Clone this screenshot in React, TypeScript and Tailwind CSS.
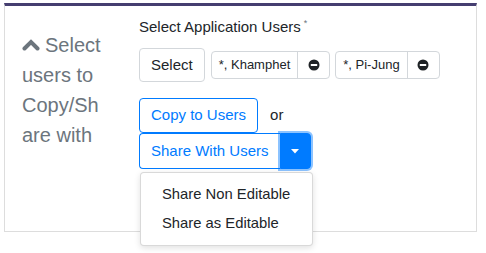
import React from "react";

function MinusCircle() {
  return (
    <svg width="12" height="12" viewBox="0 0 12 12">
      <circle cx="6" cy="6" r="5.5" fill="#1f2326" />
      <rect x="2.8" y="5" width="6.4" height="2" fill="#fff" />
    </svg>
  );
}

function Chip({ label }: { label: string }) {
  return (
    <div className="flex h-[28px] items-stretch rounded-[4px] border border-[#d3d7db] text-[13px] text-[#212529]">
      <div className="flex items-center px-[7px]">{label}</div>
      <div className="flex w-[32px] items-center justify-center border-l border-[#d3d7db]">
        <MinusCircle />
      </div>
    </div>
  );
}

export default function App() {
  return (
    <div
      className="min-h-[253px] bg-white pl-[4px] pt-[3px]"
      style={{ fontFamily: '"Liberation Sans", Arial, Helvetica, sans-serif' }}
    >
      <div className="flex h-[229px] w-[473px] border border-t-[3px] border-[#dddddd] border-t-[#453e70] bg-white">
        <div className="w-[134px] shrink-0 pl-[17px] pt-[24px]">
          <div className="w-[82px] break-all text-[20px] leading-[30px] text-[#6c757d]">
            <svg
              width="18"
              height="12"
              viewBox="0 0 18 12"
              className="mr-[5px] inline-block align-[1px]"
            >
              <polyline
                points="2.5,9.5 9,3 15.5,9.5"
                fill="none"
                stroke="#6c757d"
                strokeWidth="4"
                strokeLinecap="round"
                strokeLinejoin="miter"
              />
            </svg>
            Select users to Copy/Share with
          </div>
        </div>
        <div className="flex-1 pt-[10px]">
          <div className="h-[22px] text-[15px] leading-[22px] text-[#212529]">
            Select Application Users
            <span className="relative top-[-6px] ml-[3px] text-[9px] leading-none text-[#6c757d]">*</span>
          </div>
          <div className="mt-[10px] flex items-center">
            <div className="flex h-[34px] items-center rounded-[4px] border border-[#d3d7db] px-[11px] text-[15px] text-[#212529]">
              Select
            </div>
            <div className="ml-[6px]">
              <Chip label="*, Khamphet" />
            </div>
            <div className="ml-[5px]">
              <Chip label="*, Pi-Jung" />
            </div>
          </div>
          <div className="mt-[16px] flex items-center">
            <div className="flex h-[35px] items-center rounded-[4px] border border-[#007bff] px-[11px] text-[15px] text-[#007bff]">
              Copy to Users
            </div>
            <div className="ml-[12px] text-[15px] text-[#212529]">or</div>
          </div>
          <div className="relative z-10 w-fit">
            <div className="flex h-[36px]">
              <div className="flex items-center rounded-l-[4px] border border-r-0 border-[#007bff] px-[11px] text-[15px] text-[#007bff]">
                Share With Users
              </div>
              <div className="flex w-[31px] items-center justify-center rounded-r-[4px] border border-[#007bff] bg-[#007bff] shadow-[0_0_0_2px_rgba(0,123,255,0.45)]">
                <svg width="8" height="5" viewBox="0 0 8 5">
                  <polygon points="0,0 8,0 4,4.5" fill="#fff" />
                </svg>
              </div>
            </div>
            <div className="absolute left-[1px] top-full mt-[3px] w-[173px] rounded-[4px] border border-[rgba(0,0,0,0.15)] bg-white py-[7px] shadow-[0_2px_6px_rgba(0,0,0,0.12)]">
              <div className="whitespace-nowrap px-[21px] py-[4px] text-[14.8px] leading-[21px] text-[#212529]">
                Share Non Editable
              </div>
              <div className="whitespace-nowrap px-[21px] py-[4px] text-[14.8px] leading-[21px] text-[#212529]">
                Share as Editable
              </div>
            </div>
          </div>
        </div>
      </div>
    </div>
  );
}
